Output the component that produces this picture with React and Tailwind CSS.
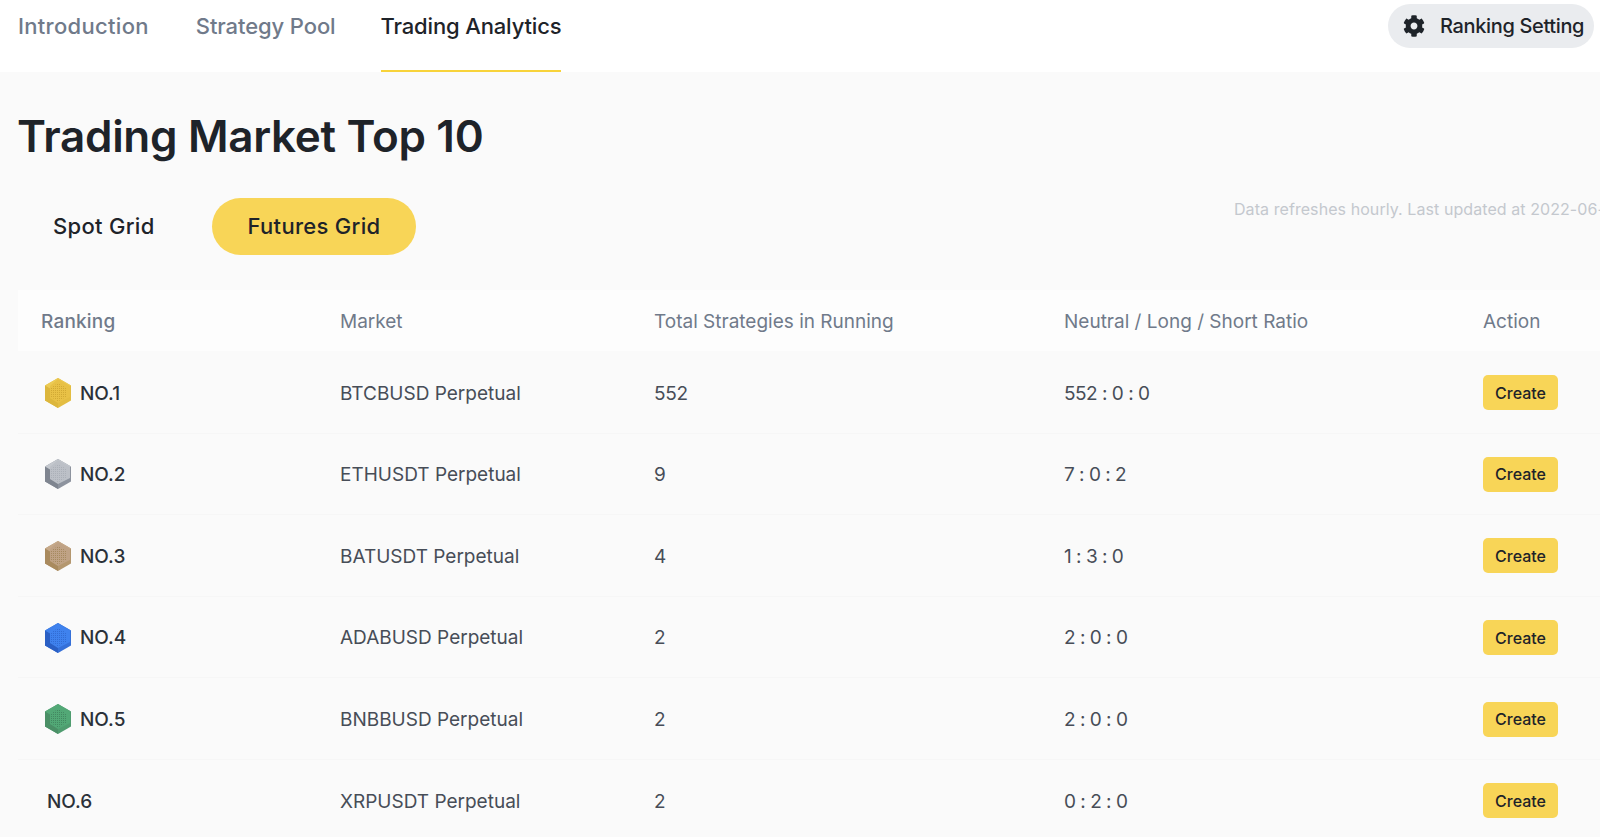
import React from "react";
import { FaCog } from "react-icons/fa";

const rows = [
  { no: "NO.1", market: "BTCBUSD Perpetual", total: "552", ratio: "552 : 0 : 0", medal: "gold" },
  { no: "NO.2", market: "ETHUSDT Perpetual", total: "9", ratio: "7 : 0 : 2", medal: "silver" },
  { no: "NO.3", market: "BATUSDT Perpetual", total: "4", ratio: "1 : 3 : 0", medal: "bronze" },
  { no: "NO.4", market: "ADABUSD Perpetual", total: "2", ratio: "2 : 0 : 0", medal: "blue" },
  { no: "NO.5", market: "BNBBUSD Perpetual", total: "2", ratio: "2 : 0 : 0", medal: "green" },
  { no: "NO.6", market: "XRPUSDT Perpetual", total: "2", ratio: "0 : 2 : 0", medal: null },
];

const palette = {
  gold: { top: "#eccb55", left: "#dcb63c", right: "#e3bd42", face: "#e8c146", dot: "#c9a02c" },
  silver: { top: "#c4c8ce", left: "#7f8590", right: "#8d939e", face: "#bcc0c7", dot: "#a4a9b2" },
  bronze: { top: "#c6a98a", left: "#a98a5e", right: "#b4976f", face: "#bfa285", dot: "#9b7f4f" },
  blue: { top: "#3f80ea", left: "#2a5fc4", right: "#3570d8", face: "#3f82ee", dot: "#2c62c8" },
  green: { top: "#55a877", left: "#4a8f66", right: "#4f9c6f", face: "#52a876", dot: "#3d7a58" },
};

function Medal({ kind }) {
  const c = palette[kind];
  return (
    <svg width="26" height="30" viewBox="0 0 26 30" className="shrink-0">
      <defs>
        <pattern id={"dots-" + kind} width="2" height="2" patternUnits="userSpaceOnUse">
          <rect x="0" y="0" width="1" height="1" fill={c.dot} />
        </pattern>
      </defs>
      <polygon points="13,0 26,7.5 26,22.5 13,30 0,22.5 0,7.5" fill={c.right} />
      <polygon points="0,7.5 13,15 13,30 0,22.5" fill={c.left} />
      <polygon points="13,0 26,7.5 13,15 0,7.5" fill={c.top} />
      <polygon points="13,1 25,8 25,19 13,25 5,20 5,8" fill={c.face} />
      <polygon points="13,5 21,9.5 21,19 13,23.5 6,19 6,9.5" fill={"url(#dots-" + kind + ")"} opacity="0.7" />
    </svg>
  );
}

export default function App() {
  return (
    <div className="w-[1600px] h-[837px] overflow-hidden bg-[#fafafa] text-[#1e2329] font-['Inter','Noto_Sans',sans-serif]">
      <header className="h-[72px] bg-white flex items-start justify-between pl-[18px] pr-[6px]">
        <nav className="flex text-[22px] leading-[52px] font-medium">
          <span className="h-[72px] mr-[47px] text-[#707a8a] tracking-[0.3px]">Introduction</span>
          <span className="h-[72px] mr-[45px] text-[#707a8a] tracking-[-0.1px]">Strategy Pool</span>
          <span className="h-[72px] text-[#1e2329] tracking-[-0.15px] border-b-2 border-[#f8d33a]">Trading Analytics</span>
        </nav>
        <button className="mt-[4px] h-[44px] w-[206px] rounded-full bg-[#eaecef] flex items-center pl-[15px] text-[20px] font-medium tracking-[-0.35px]">
          <FaCog className="text-[22px] mr-[15px] text-[#1e2329]" />
          Ranking Setting
        </button>
      </header>

      <main className="pl-[18px]">
        <h1 className="pt-[34px] h-[126px] -ml-px text-[44px] leading-[60px] font-semibold tracking-[-0.3px] text-[#1e2329]">
          Trading Market Top 10
        </h1>

        <div className="flex items-start h-[92px] whitespace-nowrap">
          <button className="h-[57px] w-[194px] shrink-0 rounded-full text-left pl-[35px] text-[22px] font-medium tracking-[0.3px] text-[#1e2329]">
            Spot Grid
          </button>
          <button className="h-[57px] w-[204px] shrink-0 rounded-full bg-[#f8d557] text-[22px] font-medium tracking-[0.3px] text-[#1e2329]">
            Futures Grid
          </button>
          <span className="ml-[818px] shrink-0 text-[16px] leading-[22px] tracking-[0.07px] text-[#c4c8ce]">
            Data refreshes hourly. Last updated at 2022-06-19 10:00:00
          </span>
        </div>

        <div className="w-[1600px]">
          <div className="grid grid-cols-[322px_314px_410px_418px_1fr] h-[61px] pt-[4px] items-center bg-[#fdfdfd] text-[19px] text-[#707a8a]">
            <span className="pl-[23px] font-medium tracking-[0.2px]">Ranking</span>
            <span>Market</span>
            <span>Total Strategies in Running</span>
            <span>Neutral / Long / Short Ratio</span>
            <span className="pl-px">Action</span>
          </div>
          <div className="pt-px">
            {rows.map((r) => (
              <div
                key={r.no}
                className="grid grid-cols-[322px_314px_410px_418px_1fr] h-[81.6px] pt-px items-center border-b border-[#f6f6f6] text-[19px] text-[#474d57]"
              >
                <span className={"flex items-center font-medium text-[#2b3139] " + (r.medal ? "pl-[27px] gap-[9px]" : "pl-[29px]")}>
                  {r.medal && <Medal kind={r.medal} />}
                  <span className="pt-[2px]">{r.no}</span>
                </span>
                <span className="pt-[2px]">{r.market}</span>
                <span className="pt-[2px] tracking-[-0.3px]">{r.total}</span>
                <span className="pt-[2px] tracking-[-0.5px]">{r.ratio}</span>
                <span className="pl-px">
                  <button className="h-[35px] w-[75px] rounded-[5px] bg-[#f8d557] text-[16px] font-medium text-[#1e2329]">
                    Create
                  </button>
                </span>
              </div>
            ))}
          </div>
        </div>
      </main>
    </div>
  );
}
